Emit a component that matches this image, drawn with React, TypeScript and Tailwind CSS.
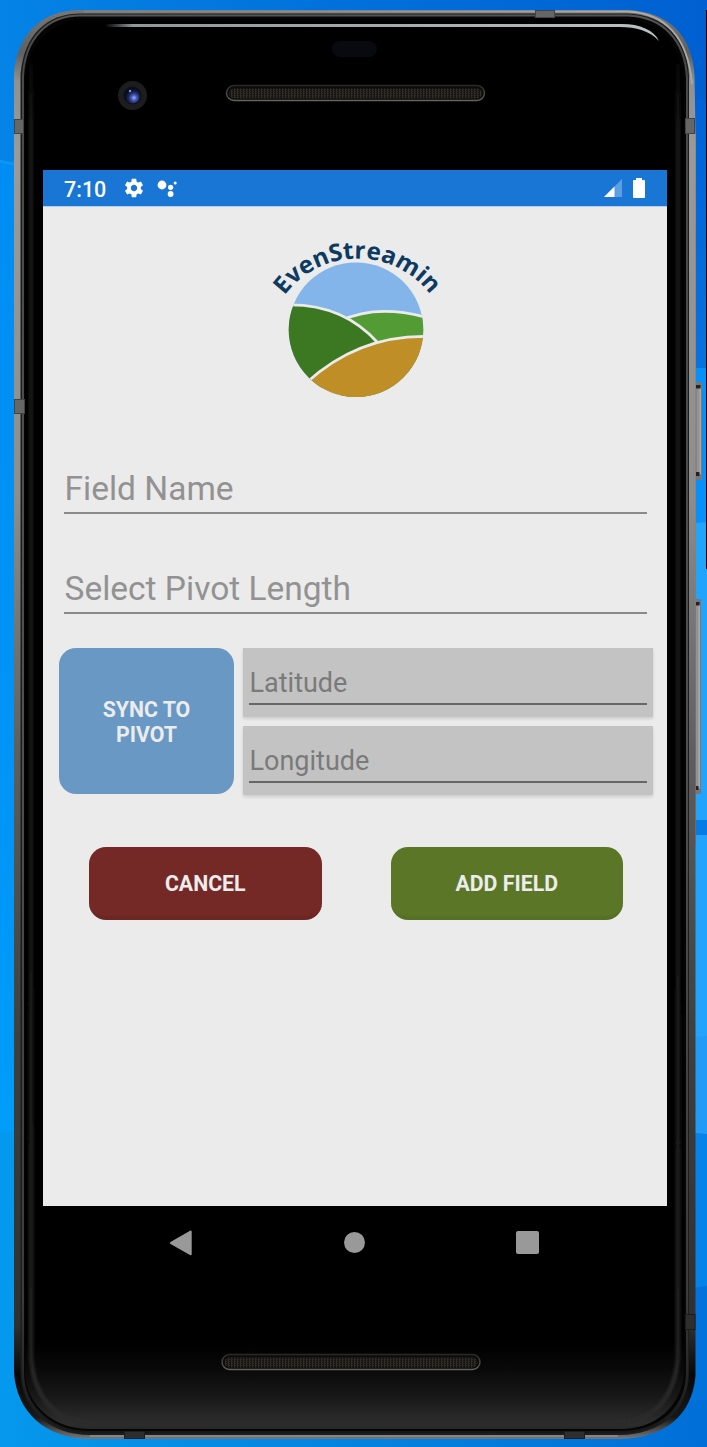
import React from "react";

function Wallpaper() {
  return (
    <svg className="absolute inset-0" width="707" height="1447" viewBox="0 0 707 1447" aria-hidden="true">
      <defs>
        <linearGradient id="skyTop" x1="0" x2="1">
          <stop offset="0" stopColor="#0583e6" />
          <stop offset="0.5" stopColor="#0070dc" />
          <stop offset="1" stopColor="#0060d2" />
        </linearGradient>
        <linearGradient id="skyLeft" x1="0" y1="0" x2="0" y2="1">
          <stop offset="0" stopColor="#008df3" />
          <stop offset="0.6" stopColor="#0094f6" />
          <stop offset="1" stopColor="#009dfa" />
        </linearGradient>
        <linearGradient id="skyRight" x1="0" y1="0" x2="0" y2="1">
          <stop offset="0" stopColor="#0062d6" />
          <stop offset="1" stopColor="#0872de" />
        </linearGradient>
        <linearGradient id="skyBottom" x1="0" x2="1">
          <stop offset="0" stopColor="#0598ec" />
          <stop offset="1" stopColor="#006fd8" />
        </linearGradient>
      </defs>
      <rect width="707" height="1447" fill="url(#skyTop)" />
      <path d="M0 160 Q20 165 60 178 V1140 H0Z" fill="url(#skyLeft)" />
      <path d="M0 161 Q20 165 60 177" fill="none" stroke="#0c96f2" strokeWidth="3" />
      <rect x="640" y="100" width="67" height="268" fill="url(#skyRight)" />
      <path d="M640 368H707V523L640 528Z" fill="#0890fa" />
      <path d="M640 528L707 522V1040H640Z" fill="#22a3fc" />
      <rect x="640" y="820" width="67" height="15" fill="#067be6" />
      <path d="M640 1040L707 1036V1136L640 1128Z" fill="#229bf7" />
      <path d="M640 1128L707 1134V1290H640Z" fill="#0583e8" />
      <path d="M640 1296L707 1286V1447H640Z" fill="#0373dc" />
      <path d="M0 1132L60 1126V1447H0Z" fill="#0499ef" />
      <rect y="1400" width="707" height="47" fill="url(#skyBottom)" />
      <rect x="706" y="10" width="1" height="559" fill="#000" />
    </svg>
  );
}

function Grille({ x, y }: { x: number; y: number }) {
  return (
    <g>
      <rect x={x + 0.5} y={y + 0.5} width="258" height="15" rx="7.5" fill="#0b0b0a" stroke="url(#grilleRim)" strokeWidth="1.4" />
      <rect x={x + 3} y={y + 3.5} width="253" height="10" rx="5" fill="url(#mesh)" />
    </g>
  );
}

function SideKey({ x, y, w, h }: { x: number; y: number; w: number; h: number }) {
  return (
    <g>
      <rect x={x} y={y} width={w} height={h} rx="1.5" fill="#777" />
      <rect x={x + 1.5} y={y + 5} width={w - 3} height={h - 10} fill="#929292" />
      <rect x={x + w - 2.5} y={y + 6} width="1.5" height={h - 12} fill="#aaa" />
      <rect x={x + 0.5} y={y + 3} width={w - 2} height="3.5" fill="#222" />
      <rect x={x + 0.5} y={y + h - 8} width={w - 3} height="4" fill="#222" />
    </g>
  );
}

function Device() {
  return (
    <svg className="absolute inset-0" width="707" height="1447" viewBox="0 0 707 1447" aria-hidden="true">
      <defs>
        <linearGradient id="metal" x1="0" y1="10" x2="0" y2="1439" gradientUnits="userSpaceOnUse">
          <stop offset="0" stopColor="#777" />
          <stop offset="0.03" stopColor="#606060" />
          <stop offset="0.05" stopColor="#909090" />
          <stop offset="0.1" stopColor="#9a9a9a" />
          <stop offset="0.34" stopColor="#8d8d8d" />
          <stop offset="0.52" stopColor="#5e5e5e" />
          <stop offset="0.72" stopColor="#3f3f3f" />
          <stop offset="0.92" stopColor="#303030" />
          <stop offset="0.955" stopColor="#080808" />
          <stop offset="0.985" stopColor="#181818" />
          <stop offset="1" stopColor="#777" />
        </linearGradient>
        <linearGradient id="innerMetal" x1="0" y1="10" x2="0" y2="1439" gradientUnits="userSpaceOnUse">
          <stop offset="0" stopColor="#555" />
          <stop offset="0.03" stopColor="#484848" />
          <stop offset="0.5" stopColor="#505050" />
          <stop offset="0.9" stopColor="#3c3c3c" />
          <stop offset="1" stopColor="#151515" />
        </linearGradient>
        <linearGradient id="glow" x1="0" y1="1340" x2="0" y2="1430" gradientUnits="userSpaceOnUse">
          <stop offset="0" stopColor="#000" />
          <stop offset="0.3" stopColor="#080808" />
          <stop offset="0.65" stopColor="#191919" />
          <stop offset="0.93" stopColor="#2e2e2e" />
          <stop offset="1" stopColor="#272727" />
        </linearGradient>
        <linearGradient id="edgeGlow" x1="0" y1="50" x2="0" y2="1424" gradientUnits="userSpaceOnUse">
          <stop offset="0" stopColor="#1c1c1c" stopOpacity="0" />
          <stop offset="0.06" stopColor="#1c1c1c" />
          <stop offset="0.85" stopColor="#202020" />
          <stop offset="1" stopColor="#2c2c2c" />
        </linearGradient>
        <linearGradient id="shine" x1="105" y1="0" x2="660" y2="0" gradientUnits="userSpaceOnUse">
          <stop offset="0" stopColor="#8e9999" stopOpacity="0" />
          <stop offset="0.05" stopColor="#8e9999" />
          <stop offset="1" stopColor="#b8c2c2" />
        </linearGradient>
        <linearGradient id="topRim" x1="80" y1="0" x2="620" y2="0" gradientUnits="userSpaceOnUse">
          <stop offset="0" stopColor="#888" stopOpacity="0.6" />
          <stop offset="0.5" stopColor="#909090" />
          <stop offset="1" stopColor="#aaa" />
        </linearGradient>
        <linearGradient id="grilleRim" x1="0" y1="0" x2="0" y2="1">
          <stop offset="0" stopColor="#292929" />
          <stop offset="1" stopColor="#62625f" />
        </linearGradient>
        <radialGradient id="lens" cx="0.6" cy="0.62" r="0.6">
          <stop offset="0" stopColor="#a8b8ff" />
          <stop offset="0.25" stopColor="#5064c8" />
          <stop offset="0.6" stopColor="#1d2860" />
          <stop offset="1" stopColor="#070a18" />
        </radialGradient>
        <pattern id="mesh" width="3" height="2" patternUnits="userSpaceOnUse">
          <rect width="3" height="2" fill="#161512" />
          <rect width="1" height="2" fill="#302d27" />
          <rect x="1" y="1" width="1" height="1" fill="#2b2924" />
        </pattern>
        <filter id="soft" filterUnits="userSpaceOnUse" x="0" y="0" width="707" height="1447">
          <feGaussianBlur stdDeviation="1.8" />
        </filter>
      </defs>

      <SideKey x={695} y={382} w={7} h={98} />
      <SideKey x={693} y={599} w={8} h={195} />
      <rect x="694" y="134" width="2" height="710" fill="#8a7a70" />

      <path d="M80 10H628C668 12 692 34 694.5 76L695.5 134V1376C692 1416 664 1438 620 1439H90C46 1439 16 1412 14 1372V72C18 32 44 10 80 10Z" fill="url(#metal)" />
      <path d="M80 13.5H628C664 15 687 37 689 76V1374C688 1412 660 1434.5 620 1435H90C50 1435 21 1410 20.5 1372V74C24 34 48 13.5 80 13.5Z" fill="#1d1d1d" />
      <path d="M80 15.5H628C662 17 685 39 687 78V1374C686 1410 658 1432 620 1432H90C52 1432 23 1408 23 1372V76C25 38 48 15.5 80 15.5Z" fill="#050505" stroke="url(#innerMetal)" strokeWidth="2" />
      <path d="M84 11.5H628C664 13 688 36 692 84" fill="none" stroke="url(#topRim)" strokeWidth="1.8" />
      <path d="M90 1436H618" stroke="#858585" strokeWidth="2" />

      <path d="M86 19H624C660 20 682 44 684 82V1372C682 1406 656 1429 620 1429H90C54 1429 26 1406 25 1372V80C28 42 54 19 86 19Z" fill="url(#glow)" />
      <path d="M31 50V1350C31 1395 54 1422 92 1424H618C654 1422 678 1395 678 1350V50" fill="none" stroke="url(#edgeGlow)" strokeWidth="4" filter="url(#soft)" />

      <g fill="#666" stroke="#444" strokeWidth="1">
        <rect x="14.5" y="119.5" width="9" height="14" />
        <rect x="14.5" y="399.5" width="10" height="14" />
        <rect x="685.5" y="118.5" width="9" height="15" />
        <rect x="535.5" y="10.5" width="19" height="7" />
      </g>
      <g fill="#2e2e2e" stroke="#1c1c1c" strokeWidth="1">
        <rect x="685.5" y="1314.5" width="9.5" height="15" />
        <rect x="124.5" y="1431.5" width="20" height="7" />
        <rect x="564.5" y="1431.5" width="20" height="7" />
      </g>

      <path d="M105 24H622C640 24 654 30 659 41C650 31 636 27 620 27H105Z" fill="url(#shine)" />
      <rect x="332" y="41" width="45" height="16" rx="8" fill="#090a0f" />
      <Grille x={226} y={85} />
      <Grille x={221.5} y={1354} />

      <circle cx="132.5" cy="95.5" r="14.5" fill="#1e1d1e" />
      <circle cx="132.5" cy="95.5" r="9" fill="#0c0e18" />
      <circle cx="132.5" cy="96" r="7.5" fill="url(#lens)" />
      <circle cx="130" cy="91" r="1.2" fill="#8291d8" />
    </svg>
  );
}

function StatusBar() {
  return (
    <div className="flex h-9 items-center bg-[#1976d5] pl-[21px] pr-[22px] text-white shadow-[0_1px_0_#b3cfea]">
      <span className="w-[59px] pt-[3px] text-[21.5px] font-medium leading-none">7:10</span>
      <svg width="22" height="22" viewBox="0 0 24 24" fill="currentColor" aria-hidden="true">
        <path d="M19.43 12.98c.04-.32.07-.64.07-.98s-.03-.66-.07-.98l2.11-1.65c.19-.15.24-.42.12-.64l-2-3.46c-.12-.22-.39-.3-.61-.22l-2.49 1c-.52-.4-1.08-.73-1.69-.98l-.38-2.65C14.46 2.18 14.25 2 14 2h-4c-.25 0-.46.18-.49.42l-.38 2.65c-.61.25-1.17.59-1.69.98l-2.49-1c-.23-.09-.49 0-.61.22l-2 3.46c-.13.22-.07.49.12.64l2.11 1.65c-.04.32-.07.65-.07.98s.03.66.07.98l-2.11 1.65c-.19.15-.24.42-.12.64l2 3.46c.12.22.39.3.61.22l2.49-1c.52.4 1.08.73 1.69.98l.38 2.65c.03.24.24.42.49.42h4c.25 0 .46-.18.49-.42l.38-2.65c.61-.25 1.17-.59 1.69-.98l2.49 1c.23.09.49 0 .61-.22l2-3.46c.12-.22.07-.49-.12-.64l-2.11-1.65zM12 15.5c-1.93 0-3.5-1.57-3.5-3.5s1.57-3.5 3.5-3.5 3.5 1.57 3.5 3.5-1.57 3.5-3.5 3.5z" />
      </svg>
      <svg className="ml-3 mt-[1px]" width="20" height="18" viewBox="0 0 20 18" fill="currentColor" aria-hidden="true">
        <circle cx="5" cy="5" r="4.4" />
        <circle cx="13.6" cy="7.3" r="2.6" />
        <circle cx="13.6" cy="14" r="2.9" />
        <circle cx="18.2" cy="3" r="1.5" />
      </svg>
      <svg className="ml-auto" width="18" height="18" viewBox="0 0 18 18" fill="currentColor" aria-hidden="true">
        <path d="M0 18L18 0V18Z" opacity="0.3" />
        <path d="M0 18L10.5 7.5V18Z" />
      </svg>
      <svg className="ml-[11px]" width="12" height="20" viewBox="0 0 12 20" fill="currentColor" aria-hidden="true">
        <path d="M3 0H9V2H11Q12 2 12 3V19Q12 20 11 20H1Q0 20 0 19V3Q0 2 1 2H3Z" />
      </svg>
    </div>
  );
}

function Logo() {
  return (
    <svg className="mx-auto mt-[14px] block" width="210" height="200" viewBox="0 0 210 200">
      <defs>
        <clipPath id="disc">
          <circle cx="106" cy="109.7" r="67.3" />
        </clipPath>
        <path id="nameArc" d="M34.5 75.5A91 91 0 0 1 182 77" />
      </defs>
      <g clipPath="url(#disc)">
        <rect x="38" y="42" width="136" height="136" fill="#83b5ea" />
        <path d="M90 101C115 89 145 89 175 97V180H90Z" fill="#539b35" stroke="#ebebeb" strokeWidth="2.8" />
        <path d="M36 85C70 84 102 94 128 123L60 180H36Z" fill="#3c7721" stroke="#ebebeb" strokeWidth="2.8" />
        <path d="M56 163C92 130 132 116 175 116.3V180H56Z" fill="#c08e26" stroke="#ebebeb" strokeWidth="2.8" />
      </g>
      <text className="fill-[#0c3a61] font-['Open_Sans',sans-serif] text-[24px] font-bold">
        <textPath href="#nameArc" textLength="169" lengthAdjust="spacingAndGlyphs">EvenStreamin</textPath>
      </text>
    </svg>
  );
}

function LineField({ label }: { label: string }) {
  return (
    <div className="h-[50px] border-b-2 border-[#8a8a8a] pl-[0.5px] text-[33.5px] leading-[50px] text-[#929292]">{label}</div>
  );
}

function CoordinateField({ label }: { label: string }) {
  return (
    <div className="h-[69px] bg-[#c3c3c3] px-[6px] pt-[14px] shadow-[0_2px_3px_rgba(0,0,0,0.13)]">
      <div className="h-[43px] border-b-2 border-[#666] pl-[0.5px] text-[27px] leading-[42px] text-[#7a7a7a]">{label}</div>
    </div>
  );
}

function NavigationBar() {
  return (
    <nav className="flex h-[73px] items-center">
      <svg className="ml-[126px]" width="24" height="26" viewBox="0 0 24 26" fill="#999" aria-label="Back">
        <path d="M1.5 12L21 .8Q22.7 0 22.7 2V24Q22.7 26 21 25L1.5 14Q0 13 1.5 12Z" />
      </svg>
      <span className="ml-[151px] size-[21px] rounded-full bg-[#999]" />
      <span className="ml-[151px] size-[23px] rounded-[2px] bg-[#999]" />
    </nav>
  );
}

export default function App() {
  return (
    <div className="relative h-[1447px] w-[707px] overflow-hidden font-['Roboto',sans-serif]">
      <Wallpaper />
      <Device />
      <div className="relative pl-[43px] pt-[170px]">
        <div className="w-[624px]">
          <main className="h-[1036px] bg-[#ebebeb]">
            <StatusBar />
            <Logo />
            <div className="flex flex-col gap-[50px] pl-[21px] pr-5 pt-[44px]">
              <LineField label="Field Name" />
              <LineField label="Select Pivot Length" />
            </div>
            <div className="mt-[34px] flex gap-[9px] pl-4 pr-[14px]">
              <button className="h-[146px] w-[175px] rounded-[17px] bg-[#6998c4] px-9 pt-[1px] text-[21.3px] font-bold leading-[25px] text-[#ececec]">
                SYNC TO PIVOT
              </button>
              <div className="flex flex-1 flex-col gap-[9px]">
                <CoordinateField label="Latitude" />
                <CoordinateField label="Longitude" />
              </div>
            </div>
            <div className="mt-[52px] flex justify-between pl-[46px] pr-11 text-[21.3px] font-bold text-[#ececec]">
              <button className="h-[73px] w-[232.5px] rounded-[17px] border-b-4 border-[#6c2725] bg-[#752926] pt-[5px]">CANCEL</button>
              <button className="h-[73px] w-[232.5px] rounded-[17px] border-b-4 border-[#567025] bg-[#5b7627] pt-[5px]">ADD FIELD</button>
            </div>
          </main>
          <NavigationBar />
        </div>
      </div>
    </div>
  );
}
